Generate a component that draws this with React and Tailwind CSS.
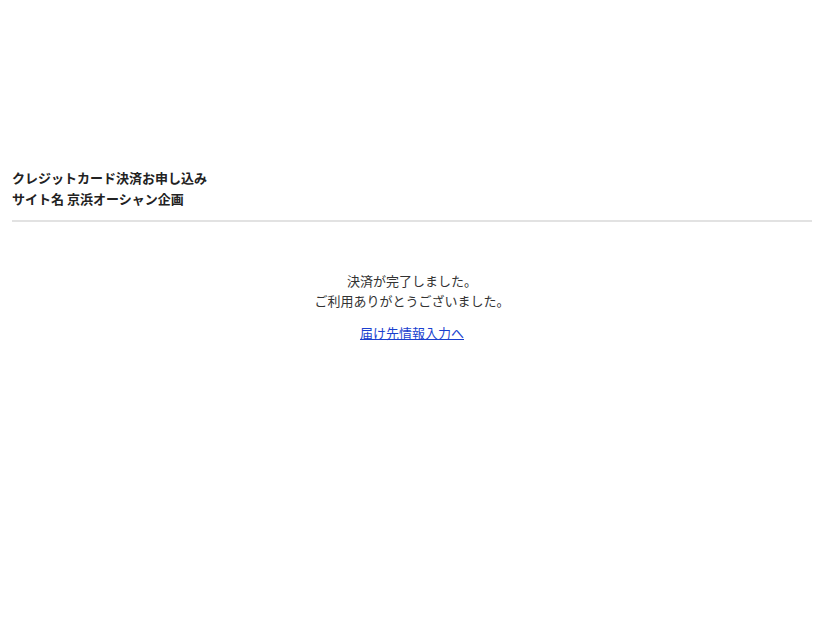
import React from 'react';

export default function App() {
	return (
		<div
			className="min-h-screen bg-white px-3 pt-[167px] text-[13px] text-[#333]"
			style={{ fontFamily: '"Noto Sans CJK JP", "Liberation Sans", sans-serif' }}
		>
			<div className="font-bold leading-[21px] text-[#222]">
				<p>クレジットカード決済お申し込み</p>
				<p>サイト名 京浜オーシャン企画</p>
			</div>

			<hr className="mt-[11px] border-0 border-t-2 border-[#e2e2e2]" />

			<div className="mt-[49px] text-center leading-[20px]">
				<p>決済が完了しました。</p>
				<p>ご利用ありがとうございました。</p>
				<p className="mt-[12px]">
					<a href="#" className="text-[#1a3fcf] underline">
						届け先情報入力へ
					</a>
				</p>
			</div>
		</div>
	);
}
